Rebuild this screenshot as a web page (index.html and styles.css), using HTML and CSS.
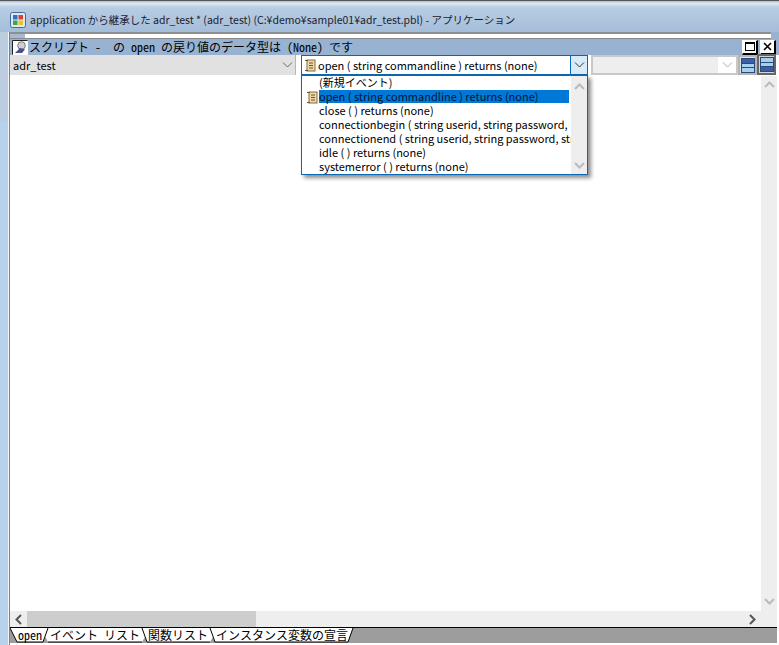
FILE: index.html
```html
<!DOCTYPE html>
<html lang="ja">
<head>
<meta charset="utf-8">
<title>adr_test</title>
<link rel="stylesheet" href="styles.css">
</head>
<body>
<div class="window">
  <header class="titlebar">
    <svg class="appicon" width="16" height="16" viewBox="0 0 16 16"><rect x=".5" y=".5" width="15" height="15" rx="2" fill="#dfe8f2" stroke="#3b6ea5"/><rect x="3" y="3" width="4.500" height="4.500" fill="#2f6fc4"/><rect x="8.500" y="3" width="4.500" height="4.500" fill="#d8402f"/><rect x="3" y="8.500" width="4.500" height="4.500" fill="#3fa648"/><rect x="8.500" y="8.500" width="4.500" height="4.500" fill="#e9c22f"/></svg>
    <span class="title">application から継承した adr_test * (adr_test) (C:¥demo¥sample01¥adr_test.pbl) - アプリケーション</span>
  </header>
  <div class="client">
    <div class="splitter"><span class="splitter-thumb"></span><span class="splitter-end"></span></div>
    <div class="caption">
      <svg class="capicon" width="16" height="15" viewBox="0 0 16 15"><rect x="1" y="1" width="15" height="14" fill="#fff"/><path d="M.5 14.500V.5h15" fill="none" stroke="#222"/><circle cx="9.500" cy="5.500" r="3.800" fill="#cfd1d6" stroke="#777"/><path d="M3 13l5-5 5 1.500-3 3.500z" fill="#4a4f8f"/></svg>
      <span class="captext">スクリプト -  の open の戻り値のデータ型は (None) です</span>
      <span class="capbtn"><i class="maxglyph"></i></span>
      <span class="capbtn"><svg width="9" height="9" viewBox="0 0 9 9"><path d="M1 1l7 7M8 1l-7 7" stroke="#000" stroke-width="1.6"/></svg></span>
    </div>
    <div class="combos">
      <div class="combo combo-object"><span class="combo-text">adr_test</span><svg class="chev" width="11" height="6" viewBox="0 0 11 6"><path d="M1 .5l4.500 4.500L10 .5" fill="none" stroke="#666"/></svg></div>
      <div class="combo combo-event">
        <svg class="scroll" width="11" height="13" viewBox="0 0 11 13"><use href="#scroll"/></svg>
        <span class="combo-text">open ( string commandline ) returns (none)</span>
        <span class="dropbtn"><svg width="11" height="6" viewBox="0 0 11 6"><path d="M1 .5l4.500 4.500L10 .5" fill="none" stroke="#333"/></svg></span>
      </div>
      <div class="combo combo-empty"><span class="empty-fill"></span><svg class="chev" width="11" height="6" viewBox="0 0 11 6"><path d="M1 .5l4.500 4.500L10 .5" fill="none" stroke="#aaa"/></svg></div>
      <span class="viewbtn"><svg width="14" height="15" viewBox="0 0 14 15"><rect x=".5" y=".5" width="13" height="14" fill="#a5d0ee" stroke="#2a4a7a"/><rect x="1" y="1" width="12" height="4" fill="#3c5da8"/><path d="M1 5.500h12M1 9.500h12" stroke="#2a4a7a"/></svg></span>
      <span class="viewbtn viewbtn-on"><svg width="14" height="15" viewBox="0 0 14 15"><rect x=".5" y=".5" width="13" height="14" fill="#a5d0ee" stroke="#2a4a7a"/><rect x="1" y="10" width="12" height="4" fill="#3c5da8"/><path d="M1 5.500h12M1 9.500h12" stroke="#2a4a7a"/></svg></span>
    </div>
    <div class="editor">
      <div class="editor-main">
        <div class="textarea"></div>
        <div class="vscroll">
          <svg width="11" height="7" viewBox="0 0 11 7"><path d="M1 6l4.500-4.500L10 6" fill="none" stroke="#bbb" stroke-width="2"/></svg>
          <svg width="11" height="7" viewBox="0 0 11 7"><path d="M1 1l4.500 4.500L10 1" fill="none" stroke="#bbb" stroke-width="2"/></svg>
        </div>
      </div>
      <div class="hscroll">
        <svg class="harrow" width="7" height="11" viewBox="0 0 7 11"><path d="M6 1L1.500 5.500 6 10" fill="none" stroke="#555" stroke-width="2"/></svg>
        <div class="htrack"><span class="hthumb"></span></div>
        <svg class="harrow" width="7" height="11" viewBox="0 0 7 11"><path d="M1 1l4.500 4.500L1 10" fill="none" stroke="#555" stroke-width="2"/></svg>
        <span class="hcorner"></span>
      </div>
    </div>
    <div class="tabs">
      <svg class="tabshape" width="360" height="15" viewBox="0 0 360 15">
        <path d="M0 0L7 14H338L343 0z" fill="#fff"/>
        <path d="M33 14h5l-2.500-5zM132 14h5l-2-5zM200 14h5l-2-5z" fill="#9d9d9d"/>
        <path d="M0 0L7 14H33L38 0M132 0L137 14M200 0L205 14H338L343 0M38 14H132M137 14H200" fill="none" stroke="#000"/>
      </svg>
      <span class="tab">open</span>
      <span class="tab">イベント リスト</span>
      <span class="tab">関数リスト</span>
      <span class="tab">インスタンス変数の宣言</span>
    </div>
    <div class="dropdown">
      <ul class="list">
        <li>(新規イベント)</li>
        <li class="sel"><svg class="scroll-li" width="11" height="13" viewBox="0 0 11 13"><use href="#scroll"/></svg><span>open ( string commandline ) returns (none)</span></li>
        <li>close ( ) returns (none)</li>
        <li>connectionbegin ( string userid, string password, </li>
        <li>connectionend ( string userid, string password, string</li>
        <li>idle ( ) returns (none)</li>
        <li>systemerror ( ) returns (none)</li>
      </ul>
      <div class="dd-scroll">
        <svg width="11" height="7" viewBox="0 0 11 7"><path d="M1 6l4.500-4.500L10 6" fill="none" stroke="#bbb" stroke-width="2"/></svg>
        <svg width="11" height="7" viewBox="0 0 11 7"><path d="M1 1l4.500 4.500L10 1" fill="none" stroke="#bbb" stroke-width="2"/></svg>
      </div>
    </div>
  </div>
</div>
<svg class="defs" width="0" height="0"><defs><g id="scroll"><rect x="2" y="1" width="8" height="11" fill="#f0d9a8" stroke="#8a6a3a"/><path d="M0 1.500h3M0 11.500h3M4 4h4M4 6.500h4M4 9h4" stroke="#6b5230"/></g></defs></svg>
</body>
</html>
```
FILE: styles.css
```css
* { box-sizing: border-box; }
html, body { margin: 0; height: 100%; }
body { width: 779px; height: 645px; overflow: hidden; font-family: "Noto Sans CJK JP", "Liberation Sans", sans-serif; font-size: 12px; color: #000; }
.window { height: 645px; display: flex; flex-direction: column; background: linear-gradient(#bccde0 120px, #b6d2ec 121px); padding: 0 0 0 9px; border-top: 1px solid #555; position: relative; }
.titlebar { height: 31px; flex: none; display: flex; align-items: center; gap: 4px; margin-left: -9px; padding: 6px 0 0 10px; background: linear-gradient(#a9c2dd, #dfe9f3 8%, #b9cde3 20%, #a4bdd9); }
.appicon { flex: none; }
.title { font-size: 10.5px; color: #1c1c30; white-space: nowrap; }
.client { flex: 1; display: flex; flex-direction: column; background: #fff; position: relative; border-left: 1px solid #7f7f7f; box-shadow: -1px 0 0 #f2f5f9; min-height: 0; }
.splitter { height: 7px; flex: none; background: #fff; border-top: 2px solid #8f8f8f; border-bottom: 1px solid #888; position: relative; }
.splitter-thumb { position: absolute; left: 0; top: 0; width: 15px; height: 4px; background: #a5bad6; }
.splitter-end { position: absolute; right: 0; top: -2px; width: 8px; height: 7px; background: #98b3d1; }
.caption { height: 16px; flex: none; display: flex; align-items: center; background: #98b3d1; padding: 0 3px 0 2px; font-family: "Noto Sans Mono CJK JP", "Noto Sans CJK JP", monospace; }
.capicon { flex: none; margin-right: 1px; }
.captext { flex: 1; font-size: 12px; white-space: pre; line-height: 16px; }
.capbtn { width: 16px; height: 15px; background: #fff; border: 1px solid #fff; border-right: 2px solid #000; border-bottom: 2px solid #000; display: flex; align-items: center; justify-content: center; margin-left: 2px; }
.maxglyph { width: 10px; height: 9px; border: 1px solid #000; border-top-width: 2px; display: block; }
.combos { height: 21px; flex: none; display: flex; background: #fff; }
.combo { height: 20px; display: flex; align-items: center; font-size: 11px; }
.combo-text { flex: 1; white-space: pre; }
.chev { flex: none; }
.combo-object { width: 286px; flex: none; background: #e1e1e1; border-right: 1px solid #b5b5b5; padding: 0 2px 0 3px; margin-right: 5px; }
.combo-event { width: 287px; flex: none; background: #fff; border: 1px solid #0a68b4; padding-left: 3px; gap: 2px; margin-right: 3px; }
.dropbtn { width: 17px; height: 18px; border-left: 1px solid #0a68b4; background: #d9ebf9; display: flex; align-items: center; justify-content: center; flex: none; }
.combo-empty { width: 147px; flex: none; background: #fff; border: 2px solid #c8c8c8; }
.empty-fill { flex: 1; height: 100%; background: #eee; }
.combo-empty .chev { margin: 0 3px 0 4px; }
.viewbtn { width: 19px; height: 20px; background: #e1e1e1; border: 2px solid #b5b5b5; flex: none; display: flex; align-items: center; justify-content: center; }
.viewbtn-on { border-color: #666; background: #d5d5d5; height: 21px; margin-top: -1px; }
.editor { flex: 1; display: flex; flex-direction: column; min-height: 0; }
.editor-main { flex: 1; display: flex; min-height: 0; }
.textarea { flex: 1; background: #fff; }
.vscroll { width: 16px; flex: none; background: #eee; display: flex; flex-direction: column; justify-content: space-between; align-items: center; padding: 5px 0 6px; margin-right: 2px; }
.hscroll { height: 16px; flex: none; display: flex; align-items: center; background: #eee; margin-right: 2px; }
.harrow { flex: none; margin: 0 5px; }
.htrack { flex: 1; height: 100%; }
.hthumb { display: block; height: 100%; width: 229px; background: #cdcdcd; }
.hcorner { width: 16px; height: 100%; background: #eee; flex: none; }
.tabs { height: 16px; flex: none; display: flex; align-items: center; gap: 8px; background: #9d9d9d; border-top: 1px solid #000; padding: 0 0 1px 8px; margin: 0 2px 2px 0; position: relative; font-family: "Noto Sans Mono CJK JP", "Noto Sans CJK JP", monospace; }
.tabshape { position: absolute; left: 0; top: 0; }
.tab { position: relative; display: block; line-height: 14px; white-space: pre; font-size: 12px; }
.dropdown { position: absolute; left: 291px; top: 43px; width: 287px; height: 100px; background: #fff; border: 1px solid #0a68b4; display: flex; box-shadow: 3px 3px 4px rgba(0,0,0,.45); font-size: 11px; z-index: 2; }
.list { flex: 1; margin: -1px 0 0; padding: 0; list-style: none; min-width: 0; overflow: hidden; }
.list li { height: 14px; line-height: 14px; padding-left: 17px; white-space: pre; position: relative; }
.list li:first-child { height: 13px; }
.list li.sel { height: 13px; }
.sel span { display: block; background: #0078d7; width: 250px; height: 13px; line-height: 13px; margin-top: 2px; color: #00142c; }
.scroll-li { position: absolute; left: 5px; top: 1px; }
.dd-scroll { width: 16px; flex: none; background: #eee; display: flex; flex-direction: column; justify-content: space-between; align-items: center; padding: 7px 0 5px; }
.defs { position: absolute; }
```
